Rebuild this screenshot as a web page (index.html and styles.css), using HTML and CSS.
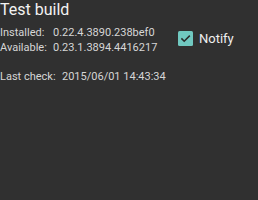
FILE: index.html
```html
<!DOCTYPE html>
<html lang="en">
<head>
  <meta charset="UTF-8">
  <title>Test build</title>
  <link rel="stylesheet" href="styles.css">
</head>
<body>
  <div class="panel">
    <h2 class="title">Test build</h2>
    <div class="row">
      <div class="versions">
        <div class="line"><span class="label">Installed:</span><span class="value">0.22.4.3890.238bef0</span></div>
        <div class="line"><span class="label">Available:</span><span class="value">0.23.1.3894.4416217</span></div>
      </div>
      <label class="notify">
        <span class="box">
          <svg width="15" height="15" viewBox="0 0 15 15">
            <rect x="0" y="0" width="15" height="15" rx="1.5" fill="#70c8c0"/>
            <path d="M3.4 7.4 L6.2 10.2 L11.8 4.6" fill="none" stroke="#2a2a2a" stroke-width="1.5"/>
          </svg>
        </span>
        Notify
      </label>
    </div>
    <div class="line last"><span class="label">Last check:</span><span class="value">2015/06/01 14:43:34</span></div>
  </div>
</body>
</html>
```

FILE: styles.css
```css
html, body {
  margin: 0;
  height: 100%;
  background: #303030;
}
body {
  font-family: Roboto, "Noto Sans", sans-serif;
  color: #d6d6d6;
}
.title {
  margin: 0;
  font-size: 16px;
  font-weight: normal;
  color: #f2f2f2;
  line-height: 19px;
}
.row {
  display: flex;
  align-items: flex-start;
  margin-top: 6px;
}
.versions {
  width: 178px;
}
.line {
  font-size: 11px;
  line-height: 15px;
  white-space: nowrap;
}
.label {
  display: inline-block;
  width: 53px;
}
.last {
  margin-top: 14px;
}
.last .label {
  width: 62px;
}
.notify {
  display: flex;
  align-items: center;
  gap: 6px;
  margin-top: 6px;
  font-size: 13px;
  line-height: 15px;
  color: #eeeeee;
}
.box {
  display: flex;
}
```
